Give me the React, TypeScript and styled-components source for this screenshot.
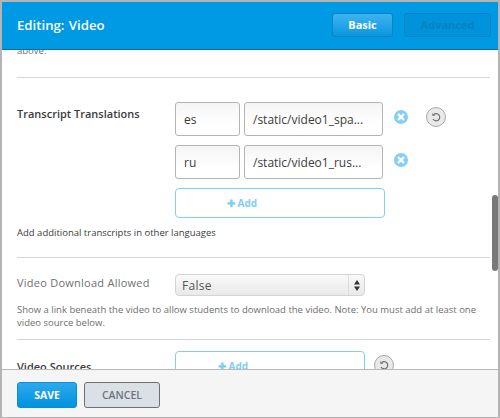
import styled, { createGlobalStyle } from 'styled-components';

const GlobalStyle = createGlobalStyle`
    html, body { margin: 0; padding: 0; background: #fff; }
    * { box-sizing: border-box; }
`;

const Modal = styled.div`
    width: 500px;
    height: 418px;
    display: flex;
    flex-direction: column;
    position: relative;
    overflow: hidden;
    background: #fff;
    border-top: 2px solid #b4b4b4;
    border-left: 2px solid #b4b4b4;
    border-right: 2px solid #b4b4b4;
    border-bottom: 1px solid #b4b4b4;
    font-family: "Open Sans", "Liberation Sans", sans-serif;
    color: #3c3c3c;
`;

const Header = styled.header`
    height: 48px;
    flex: none;
    margin: 0 -2px 0 0;
    padding: 0 9px 2px 15px;
    display: flex;
    align-items: center;
    justify-content: space-between;
    background: #009ae4;
    border-bottom: 1px solid #0b6fa3;
    color: #fff;
    font-size: 13.2px;
    font-weight: 600;
    position: relative;
    z-index: 1;
`;

const Title = styled.h1`
    margin: 0;
    font: inherit;
    word-spacing: 1px;
`;

const Tabs = styled.div`
    display: flex;
    gap: 11px;
`;

const Tab = styled.button<{ $active?: boolean }>`
    height: 24px;
    width: ${(p) => (p.$active ? '61px' : '87px')};
    padding: 0;
    border-radius: 3px;
    border: 1px solid #0882c0;
    font-family: inherit;
    font-size: 11px;
    font-weight: 700;
    color: ${(p) => (p.$active ? '#fff' : '#0582c2')};
    background: ${(p) => (p.$active ? 'linear-gradient(#3fb3f0, #0a97e0)' : '#0092da')};
`;

const Scroller = styled.div`
    flex: 1;
    min-height: 0;
    overflow: hidden;
    position: relative;
`;

const Sheet = styled.div`
    margin-top: -6px;
    padding: 0 8px 0 15px;
`;

const Section = styled.section<{ $pad: string; $last?: boolean }>`
    padding: ${(p) => p.$pad};
    border-bottom: ${(p) => (p.$last ? 'none' : '1px solid #d6d6d6')};
`;

const Note = styled.p<{ $gap?: number; $dark?: boolean }>`
    margin: ${(p) => p.$gap ?? 0}px 0 0;
    max-width: 462px;
    font-size: 9.5px;
    line-height: 13px;
    color: ${(p) => (p.$dark ? '#3c3c3c' : '#6e6e6e')};
`;

const Row = styled.div`
    display: flex;
    align-items: flex-start;
`;

const Label = styled.label<{ $muted?: boolean; $top?: number }>`
    width: 158px;
    flex: none;
    margin-top: ${(p) => p.$top ?? 0}px;
    font-size: 11px;
    font-weight: ${(p) => (p.$muted ? 400 : 600)};
    letter-spacing: ${(p) => (p.$muted ? '0.25px' : '0')};
    color: ${(p) => (p.$muted ? '#707070' : '#3c3c3c')};
`;

const Fields = styled.div`
    display: flex;
    flex-direction: column;
    gap: 9px;
`;

const FieldRow = styled.div`
    display: flex;
    align-items: center;
    gap: 4px;
`;

const Field = styled.div<{ $wide?: boolean }>`
    width: ${(p) => (p.$wide ? '139px' : '65px')};
    height: 34px;
    padding: 0 8px;
    display: flex;
    align-items: center;
    border: 1px solid #b4b4b4;
    border-radius: 3px;
    background: linear-gradient(#f5f5f5, #fff 70%);
    font-size: 12px;
    color: #3c3c3c;
    white-space: nowrap;
    overflow: hidden;
`;

const RemoveIcon = styled.svg`
    width: 14px;
    height: 14px;
    margin: 0 0 4px 7px;
    flex: none;
`;

const ResetButton = styled.button<{ $left: number; $bottom?: number; $top?: number }>`
    width: 20px;
    height: 20px;
    flex: none;
    padding: 0;
    margin: ${(p) => p.$top ?? 0}px 0 ${(p) => p.$bottom ?? 0}px ${(p) => p.$left}px;
    display: flex;
    align-items: center;
    justify-content: center;
    border-radius: 50%;
    border: 1px solid #a8a8a8;
    background: #e9e9e9;
`;

const AddButton = styled.button<{ $width: number; $shift: number }>`
    width: ${(p) => p.$width}px;
    height: 30px;
    flex: none;
    padding: 0 ${(p) => p.$shift}px 0 0;
    border: 1px solid #7fd0f7;
    border-radius: 4px;
    background: #fff;
    color: #7fcdf5;
    font-family: inherit;
    font-size: 10px;
    font-weight: 700;
`;

const SelectBox = styled.div`
    width: 190px;
    height: 22px;
    margin-top: -1px;
    display: flex;
    align-items: center;
    justify-content: space-between;
    border: 1px solid #d4d4d4;
    border-radius: 4px;
    background: linear-gradient(#f9f9f9, #e9e9e9);
    padding-left: 6px;
    font-size: 12px;
    letter-spacing: 0.3px;
    color: #555;
`;

const SelectArrows = styled.span`
    width: 16px;
    height: 20px;
    display: flex;
    align-items: center;
    justify-content: center;
    border-left: 1px solid #dcdcdc;
`;

const ScrollThumb = styled.div`
    position: absolute;
    right: 0;
    top: 145px;
    width: 6px;
    height: 76px;
    border-radius: 3px;
    background: #787878;
`;

const Footer = styled.footer`
    height: 48px;
    flex: none;
    padding: 12px 15px 0;
    display: flex;
    align-items: flex-start;
    gap: 7px;
    border-top: 1px solid #b9b9b9;
    background: #f5f5f5;
`;

const SaveButton = styled.button`
    width: 60px;
    height: 26px;
    padding: 0;
    border: 1px solid #0a8fd6;
    border-radius: 3px;
    background: linear-gradient(#2fa9ec, #0092df);
    color: #fff;
    font-family: inherit;
    font-size: 10.5px;
    font-weight: 700;
`;

const CancelButton = styled.button`
    width: 76px;
    height: 26px;
    padding: 0;
    border: 1px solid #6f6f6f;
    border-radius: 3px;
    background: #dbe0e6;
    color: #6b7480;
    font-family: inherit;
    font-size: 10.5px;
    font-weight: 600;
`;

const Remove = () => (
    <RemoveIcon viewBox="0 0 14 14">
        <circle cx="7" cy="7" r="7" fill="#83cff5" />
        <path d="M4.6 4.6l4.8 4.8M9.4 4.6l-4.8 4.8" stroke="#fff" strokeWidth="2.2" strokeLinecap="round" />
    </RemoveIcon>
);

const ResetIcon = () => (
    <svg width="10" height="10" viewBox="0 0 10 10" fill="none">
        <path d="M2.6 2.6A3.6 3.6 0 1 1 2 7" stroke="#707070" strokeWidth="1.2" />
        <path d="M1.2 1.2l.3 2.9 2.8-.6z" fill="#707070" />
    </svg>
);

const App = () => {
    return (
        <>
            <GlobalStyle />
            <Modal>
                <Header>
                    <Title>Editing: Video</Title>
                    <Tabs>
                        <Tab $active>Basic</Tab>
                        <Tab>Advanced</Tab>
                    </Tabs>
                </Header>
                <Scroller>
                    <Sheet>
                        <Section $pad="0 0 20px">
                            <Note>above.</Note>
                        </Section>
                        <Section $pad="24px 0 18px">
                            <Row>
                                <Label $top={4}>Transcript Translations</Label>
                                <Fields>
                                    <FieldRow>
                                        <Field>es</Field>
                                        <Field $wide>/static/video1_spa...</Field>
                                        <Remove />
                                        <ResetButton $left={14} $bottom={4}>
                                            <ResetIcon />
                                        </ResetButton>
                                    </FieldRow>
                                    <FieldRow>
                                        <Field>ru</Field>
                                        <Field $wide>/static/video1_rus...</Field>
                                        <Remove />
                                    </FieldRow>
                                    <AddButton $width={210} $shift={76}>✚ Add</AddButton>
                                </Fields>
                            </Row>
                            <Note $gap={8} $dark>Add additional transcripts in other languages</Note>
                        </Section>
                        <Section $pad="17px 0 10px">
                            <Row>
                                <Label $muted>Video Download Allowed</Label>
                                <SelectBox>
                                    False
                                    <SelectArrows>
                                        <svg width="6" height="11" viewBox="0 0 6 11">
                                            <path d="M3 0l3 4.4H0zM3 11L0 6.6h6z" fill="#333" />
                                        </svg>
                                    </SelectArrows>
                                </SelectBox>
                            </Row>
                            <Note $gap={7}>
                                Show a link beneath the video to allow students to download the video. Note: You must add at least one video source below.
                            </Note>
                        </Section>
                        <Section $pad="11px 0 0" $last>
                            <Row>
                                <Label $top={8}>Video Sources</Label>
                                <AddButton $width={190} $shift={74}>✚ Add</AddButton>
                                <ResetButton $left={9} $top={4}>
                                    <ResetIcon />
                                </ResetButton>
                            </Row>
                        </Section>
                    </Sheet>
                    <ScrollThumb />
                </Scroller>
                <Footer>
                    <SaveButton>SAVE</SaveButton>
                    <CancelButton>CANCEL</CancelButton>
                </Footer>
            </Modal>
        </>
    );
};

export default App;
